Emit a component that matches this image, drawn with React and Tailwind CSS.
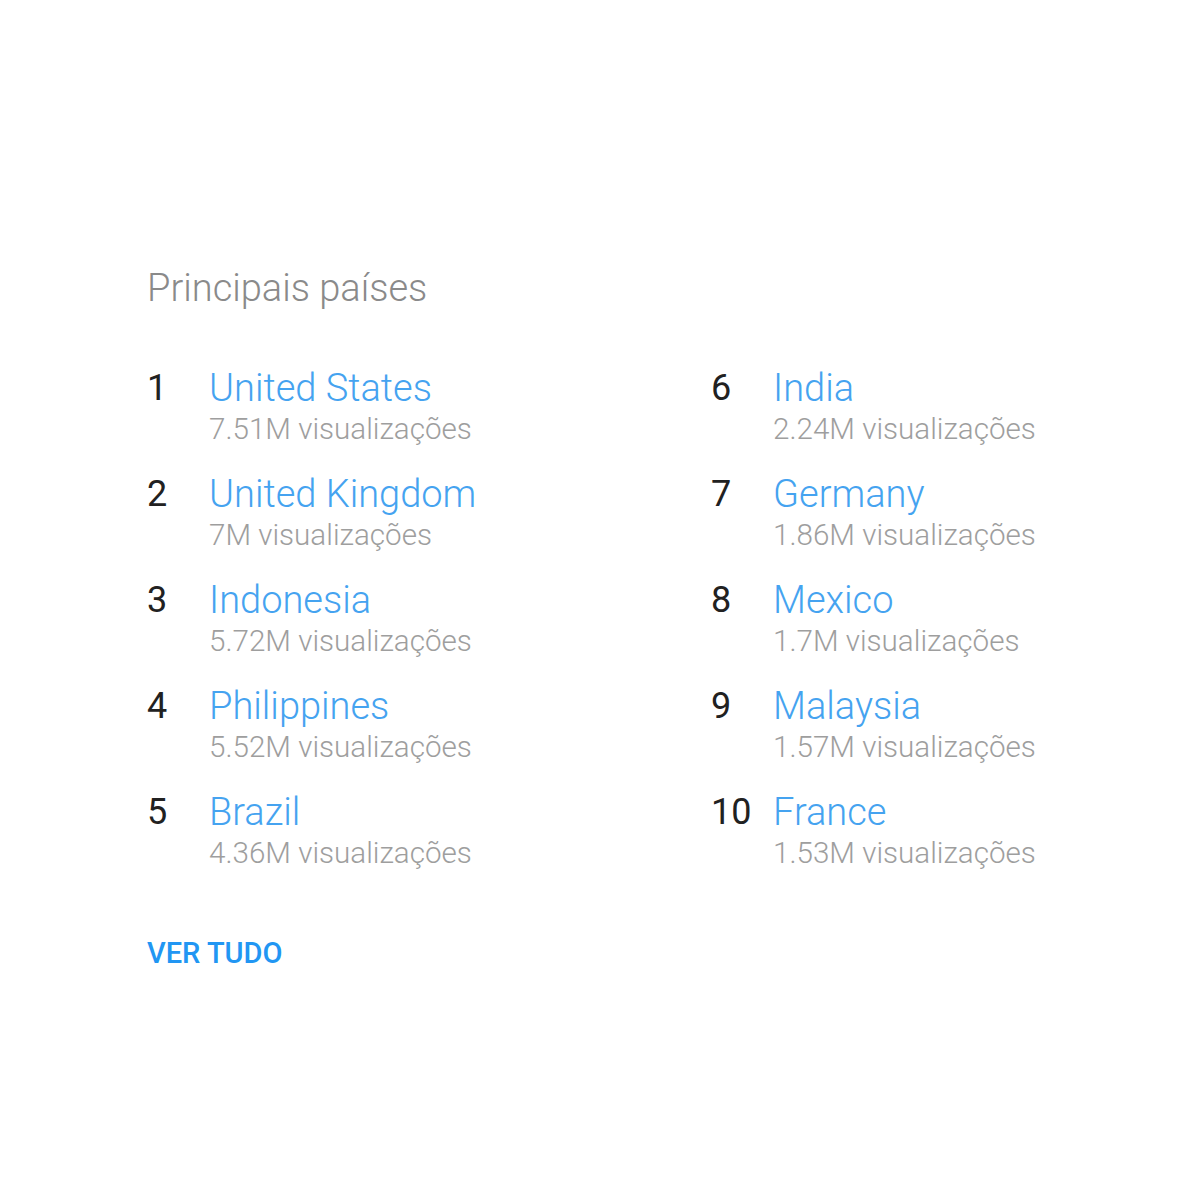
const left = [
  { rank: 1, name: "United States", views: "7.51M visualizações" },
  { rank: 2, name: "United Kingdom", views: "7M visualizações" },
  { rank: 3, name: "Indonesia", views: "5.72M visualizações" },
  { rank: 4, name: "Philippines", views: "5.52M visualizações" },
  { rank: 5, name: "Brazil", views: "4.36M visualizações" },
];

const right = [
  { rank: 6, name: "India", views: "2.24M visualizações" },
  { rank: 7, name: "Germany", views: "1.86M visualizações" },
  { rank: 8, name: "Mexico", views: "1.7M visualizações" },
  { rank: 9, name: "Malaysia", views: "1.57M visualizações" },
  { rank: 10, name: "France", views: "1.53M visualizações" },
];

const Row = ({ c }) => (
  <div className="flex h-[106px]">
    <div className="w-[62px] text-[36px] leading-[44px] text-[#212121]">
      {c.rank}
    </div>
    <div>
      <div className="text-[38px] leading-[44px] font-light text-[#45a3f0]">
        {c.name}
      </div>
      <div className="text-[29.6px] leading-[38px] font-light text-[#9e9e9e]">
        {c.views}
      </div>
    </div>
  </div>
);

const App = () => {
  return (
    <div
      className="w-[1200px] h-[1200px] bg-white pt-[262px] pl-[147px]"
      style={{ fontFamily: "Roboto, sans-serif" }}
    >
      <h1 className="text-[38px] leading-[52px] font-light text-[#8a8a8a]">
        Principais países
      </h1>

      <div className="flex mt-[52px]">
        <div className="w-[564px]">
          {left.map((c) => (
            <Row key={c.rank} c={c} />
          ))}
        </div>
        <div>
          {right.map((c) => (
            <Row key={c.rank} c={c} />
          ))}
        </div>
      </div>

      <button className="mt-[36px] text-[29px] font-medium text-[#2196f3]">
        VER TUDO
      </button>
    </div>
  );
};

export default App;
